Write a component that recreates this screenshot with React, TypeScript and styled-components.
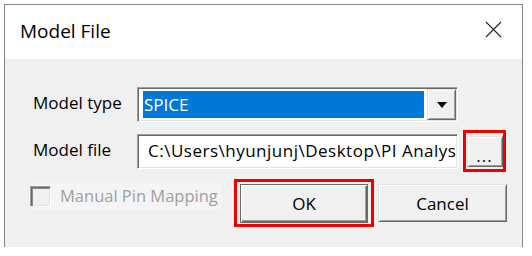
import React from "react";
import styled, { createGlobalStyle } from "styled-components";

const GlobalStyle = createGlobalStyle`
  html, body {
    margin: 0;
    padding: 0;
    background: #fff;
  }
  body {
    font-family: "Open Sans", "Noto Sans", sans-serif;
    color: #000;
  }
`;

const Page = styled.div`
  width: 532px;
  height: 256px;
  padding: 4px 0 0 4px;
  box-sizing: border-box;
  overflow: hidden;
`;

const Window = styled.div`
  width: 519px;
  height: 243px;
  box-sizing: border-box;
  border: 1px solid #858585;
  border-bottom: 0;
  display: flex;
  flex-direction: column;
`;

const TitleBar = styled.div`
  height: 52px;
  flex: none;
  background: #fff;
  display: flex;
  align-items: center;
  justify-content: space-between;
  padding: 0 20px 2px 15px;
`;

const Title = styled.span`
  font-size: 19px;
  color: #000;
`;

const CloseBtn = styled.div`
  width: 18px;
  height: 18px;
  display: flex;
  align-items: center;
  justify-content: center;
  margin-bottom: 3px;
`;

const Body = styled.div`
  flex: 1;
  background: #f0f0f0;
  display: flex;
  flex-direction: column;
  padding-top: 28px;
`;

const Row = styled.div<{ $top?: number }>`
  display: flex;
  align-items: center;
  padding-left: 28px;
  margin-top: ${(p) => p.$top ?? 0}px;
`;

const Label = styled.div`
  width: 104px;
  font-size: 17px;
  line-height: 1;
  padding-bottom: 4px;
`;

const Sunken = styled.div<{ $w: number }>`
  width: ${(p) => p.$w}px;
  height: 35px;
  box-sizing: border-box;
  border: 1px solid;
  border-color: #a0a0a0 #fff #fff #a0a0a0;
  box-shadow: inset 1px 1px 0 #696969, inset -1px -1px 0 #e3e3e3;
  background: #fff;
  display: flex;
  align-items: center;
  overflow: hidden;
`;

const ComboValue = styled.div`
  flex: 1;
  align-self: stretch;
  margin: 3px 3px 3px 5px;
  background: #0078d7;
  color: #fff;
  font-size: 17px;
  display: flex;
  align-items: center;
  padding-left: 1px;
  padding-bottom: 1px;
`;

const Raised = styled.div<{ $w: number; $h: number; $default?: boolean }>`
  width: ${(p) => p.$w}px;
  height: ${(p) => p.$h}px;
  flex: none;
  box-sizing: border-box;
  background: #f0f0f0;
  border: 1px solid;
  border-color: ${(p) =>
    p.$default ? "#6a6a6a" : "#e3e3e3 #696969 #696969 #e3e3e3"};
  box-shadow: ${(p) =>
    p.$default
      ? "inset 1px 1px 0 #fff, inset -1px -1px 0 #696969, inset -2px -2px 0 #a0a0a0"
      : "inset 1px 1px 0 #fff, inset -1px -1px 0 #a0a0a0"};
  display: flex;
  align-items: center;
  justify-content: center;
  font-size: 17px;
  color: #000;
`;

const DropBtn = styled(Raised)`
  margin-right: 1px;
`;

const Dots = styled.span`
  font-size: 17px;
  line-height: 1;
  letter-spacing: 1px;
  margin-top: 8px;
`;

const PathText = styled.div`
  font-size: 17px;
  white-space: nowrap;
  letter-spacing: 0.5px;
  padding-left: 10px;
  padding-bottom: 2px;
`;

const Mark = styled.div<{ $w: number; $h: number; $left: number }>`
  width: ${(p) => p.$w}px;
  height: ${(p) => p.$h}px;
  margin-left: ${(p) => p.$left}px;
  box-sizing: border-box;
  border: 3px solid #ee0000;
  display: flex;
  align-items: center;
  justify-content: center;
  flex: none;
`;

const Footer = styled.div`
  display: flex;
  align-items: center;
  padding-left: 24px;
  margin-top: 7px;
`;

const CheckRow = styled.div`
  width: 193px;
  height: 27px;
  align-self: flex-start;
  margin-top: 4px;
  background: #f4f4f4;
  display: flex;
  align-items: center;
  padding-left: 1px;
  box-sizing: border-box;
`;

const CheckBox = styled.div`
  width: 21px;
  height: 21px;
  box-sizing: border-box;
  border: 1px solid;
  border-color: #a0a0a0 #fff #fff #a0a0a0;
  box-shadow: inset 1px 1px 0 #696969, inset 2px 2px 0 #8a8a8a,
    inset -1px -1px 0 #e3e3e3;
  background: #f0f0f0;
`;

const CheckLabel = styled.span`
  font-size: 16.5px;
  color: #a0a0a0;
  margin-left: 9px;
  padding-bottom: 2px;
`;

const CancelBtn = styled(Raised)`
  margin-left: 4px;
`;

export default function App() {
  return (
    <>
      <GlobalStyle />
      <Page>
        <Window>
          <TitleBar>
            <Title>Model File</Title>
            <CloseBtn>
              <svg width="17" height="17" viewBox="0 0 17 17">
                <path d="M1 1 L16 16 M16 1 L1 16" stroke="#222" strokeWidth="1.1" fill="none" />
              </svg>
            </CloseBtn>
          </TitleBar>
          <Body>
            <Row>
              <Label>Model type</Label>
              <Sunken $w={321}>
                <ComboValue>SPICE</ComboValue>
                <DropBtn $w={29} $h={31}>
                  <svg width="10" height="6" viewBox="0 0 10 6">
                    <path d="M0 0 L10 0 L5 6 Z" fill="#000" />
                  </svg>
                </DropBtn>
              </Sunken>
            </Row>
            <Row $top={8}>
              <Label>Model file</Label>
              <Sunken $w={321}>
                <PathText>C:\Users\hyunjunj\Desktop\PI Analys</PathText>
              </Sunken>
              <Mark $w={43} $h={42} $left={5}>
                <Raised $w={36} $h={31}>
                  <Dots>...</Dots>
                </Raised>
              </Mark>
            </Row>
            <Footer>
              <CheckRow>
                <CheckBox />
                <CheckLabel>Manual Pin Mapping</CheckLabel>
              </CheckRow>
              <Mark $w={140} $h={48} $left={12}>
                <Raised $w={128} $h={39} $default>
                  OK
                </Raised>
              </Mark>
              <CancelBtn $w={129} $h={38}>
                Cancel
              </CancelBtn>
            </Footer>
          </Body>
        </Window>
      </Page>
    </>
  );
}
